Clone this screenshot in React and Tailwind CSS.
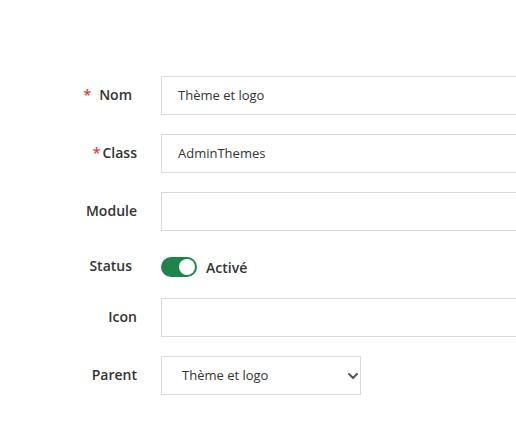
import { ChevronDown } from "lucide-react";

const Label = ({ children, className = "" }) => (
  <div className={`w-[137px] shrink-0 text-right text-[14px] font-semibold text-[#333] pb-[3px] ${className}`}>
    {children}
  </div>
);

const TextInput = ({ value = "" }) => (
  <div className="ml-[24px] h-[39px] flex-1 min-w-[420px] border border-[#d9d9d9] bg-white flex items-center pl-[16px] text-[13px] text-[#333]">
    {value}
  </div>
);

const App = () => {
  return (
    <div
      className="w-[516px] h-[422px] overflow-hidden bg-white pt-[76px]"
      style={{ fontFamily: '"Open Sans", "Noto Sans", sans-serif' }}
    >
      {/* Nom */}
      <div className="flex items-center">
        <Label className="pr-[5px]">
          <span className="text-[#e53935] mr-[8px]">*</span>Nom
        </Label>
        <TextInput value="Thème et logo" />
      </div>

      {/* Class */}
      <div className="flex items-center mt-[19px]">
        <Label>
          <span className="text-[#e53935] mr-[2px]">*</span>Class
        </Label>
        <TextInput value="AdminThemes" />
      </div>

      {/* Module */}
      <div className="flex items-center mt-[19px]">
        <Label>Module</Label>
        <TextInput />
      </div>

      {/* Status */}
      <div className="flex items-center h-[28px] mt-[22px]">
        <Label className="pr-[5px] pb-[1px]">Status</Label>
        <div className="ml-[24px] flex items-center">
          <div className="w-[36px] h-[20px] rounded-full bg-[#1e8449] flex items-center justify-end pr-[2px]">
            <div className="w-[16px] h-[16px] rounded-full bg-white" />
          </div>
          <span className="ml-[9px] text-[14px] font-semibold text-[#333]">Activé</span>
        </div>
      </div>

      {/* Icon */}
      <div className="flex items-center mt-[17px]">
        <Label>Icon</Label>
        <TextInput />
      </div>

      {/* Parent */}
      <div className="flex items-center mt-[19px]">
        <Label>Parent</Label>
        <div className="ml-[24px] h-[39px] w-[200px] border border-[#d9d9d9] bg-white flex items-center justify-between pl-[20px] text-[13px] text-[#333]">
          <span>Thème et logo</span>
          <ChevronDown size={16} strokeWidth={3} className="text-[#555] mr-[-1px] mt-[1px]" />
        </div>
      </div>
    </div>
  );
};

export default App;
